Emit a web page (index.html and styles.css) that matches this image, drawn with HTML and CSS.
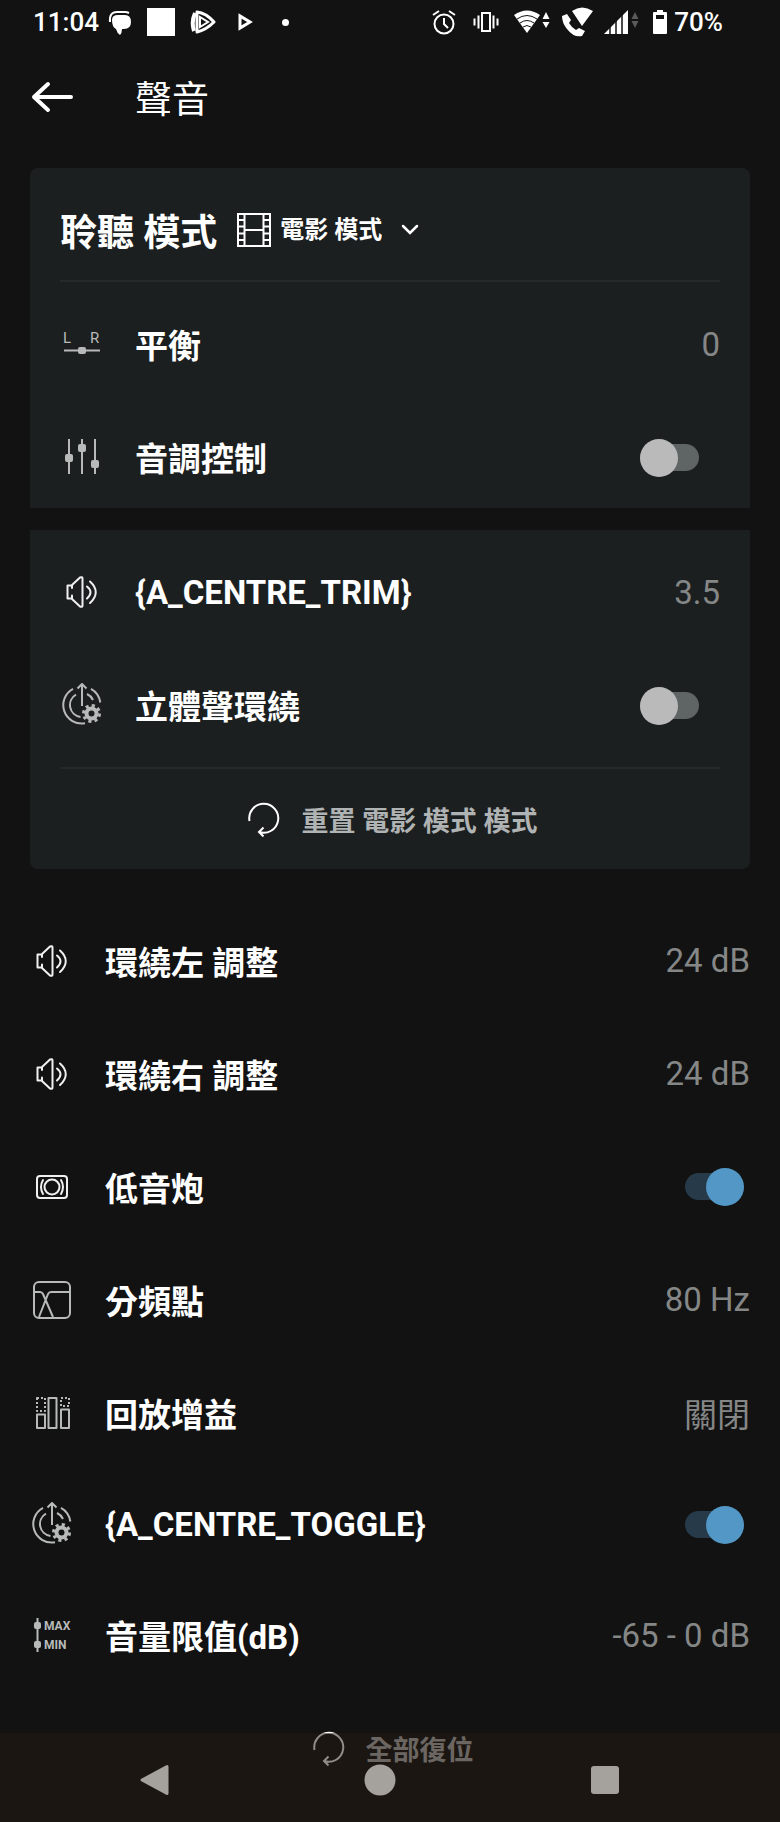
FILE: index.html
```
<!DOCTYPE html>
<html lang="zh-Hant">
<head>
    <meta charset="UTF-8">
    <meta name="viewport" content="width=device-width, initial-scale=1.0">
    <title>聲音</title>
    <link rel="stylesheet" href="styles.css">
</head>
<body>
    <!-- shared icons -->
    <svg class="sprite" aria-hidden="true">
        <symbol id="icon-speaker" viewBox="0 0 44 44">
            <path d="M12 15.500H7.500v13H12M12 18v-3l8-7.500q2.500-1 2.500 1v27q0 2-2.500 1L12 29v-3.500M27 16.500q7 5.500 0 12M30 11.500q11.500 10.500 0 21.500"/>
        </symbol>
        <symbol id="icon-source" viewBox="0 0 44 44">
            <path d="M13 5.800A18.500 18.500 0 0 0 25 40.300M31 5.800a18.500 18.500 0 0 1 9.300 13.700M16 11.600A12 12 0 0 0 20.500 33.900M27 11a12 12 0 0 1 6 6M22 23V1M17.500 5.500L22 1l4.500 4.500"/>
            <circle cx="31.500" cy="30.500" r="5" stroke-width="4"/>
            <circle cx="31.500" cy="30.500" r="8" stroke-width="3" stroke-dasharray="3.140"/>
        </symbol>
        <symbol id="icon-reset" viewBox="0 0 34 36">
            <path d="M2.500 20A14.500 14.500 0 1 1 12 31M16.500 26.500L12 31l4.500 4.500"/>
        </symbol>
    </svg>

    <div class="status-bar">
        <div class="status-left">
            <span class="clock">11:04</span>
            <svg class="s-chat" width="24" height="28" viewBox="0 0 24 28"><path d="M4 12q0-5 6-5h7q6 0 6 7t-7 7h-2q0 4-2 6-3-2-4-6-4-2-4-9z" fill="#fff"/><path d="M2 14Q1 4 9 4h8q2 0 4 1" fill="none" stroke="#fff" stroke-width="2"/></svg>
            <span class="s-square"></span>
            <svg class="s-cast" width="26" height="26" viewBox="0 0 26 26"><path d="M5 4Q1 13 4 22" fill="none" stroke="#fff" stroke-width="4"/><path d="M7 3v20q9-2 17-10Q16 4 7 3z" fill="none" stroke="#fff" stroke-width="3" stroke-linejoin="round"/><path d="M10 8v10l8-5z" fill="none" stroke="#fff" stroke-width="2"/></svg>
            <svg class="s-play" width="16" height="20" viewBox="0 0 16 20"><path d="M3 4v12l10-6z" fill="none" stroke="#fff" stroke-width="3"/></svg>
            <span class="s-dot"></span>
        </div>
        <div class="status-right">
            <svg class="s-alarm" width="24" height="26" viewBox="0 0 24 26"><g fill="none" stroke="#fff" stroke-width="2"><circle cx="12" cy="15" r="9.500"/><path d="M12 9v6l4 4M1 6l6-4M23 6l-6-4"/></g></svg>
            <svg class="s-vibrate" width="26" height="22" viewBox="0 0 26 22"><path d="M9 2h8v18H9zM5.500 4.500v13M20.500 4.500v13M1.500 7.500v7M24.500 7.500v7" fill="none" stroke="#fff" stroke-width="2"/></svg>
            <svg class="s-wifi" width="36" height="24" viewBox="0 0 36 24"><path d="M0 5q13-9 26 0L13 23z" fill="#fff"/><path d="M3 9q10-7 20 0M6 13q7-5 14 0M9 17q4-3 8 0" fill="none" stroke="#121212"/><path d="M32 2l3.500 7h-7zM32 18l3.500-6h-7z" fill="#fff"/></svg>
            <svg class="s-phone" width="32" height="30" viewBox="0 0 32 30"><path d="M11 4q10-7 21 0L21 19z" fill="#fff"/><path d="M1 9l5-2 4 6-2 3q3 5 7 7l3-2 6 3-3 5q-8 2-15-7Q1 16 1 9z" fill="#fff"/></svg>
            <svg class="s-signal" width="36" height="26" viewBox="0 0 36 26"><path d="M0 25L24 1v24z" fill="#fff"/><path d="M6 10v16M12 6v20M18 0v26" stroke="#121212" stroke-width="1.500"/><path d="M31 3l3.500 7h-7zM31 19l3.500-7h-7z" fill="#5a5a5a"/></svg>
            <svg class="s-battery" width="16" height="26" viewBox="0 0 16 26"><path d="M5 1h6v2h3q1 0 1 1v20q0 1-1 1H2q-1 0-1-1V4q0-1 1-1h3z" fill="#fff"/><path d="M4 6h8v4H4z" fill="#121212"/></svg>
            <span>70%</span>
        </div>
    </div>

    <header class="top-bar">
        <button class="back" aria-label="返回">
            <svg width="44" height="32" viewBox="0 0 44 32"><path d="M18 3L4 16l14 13M4 16h37" fill="none" stroke="#fff" stroke-width="4" stroke-linecap="round" stroke-linejoin="round"/></svg>
        </button>
        <h1>聲音</h1>
    </header>

    <main>
        <section class="card card-top">
            <div class="card-header">
                <h2><label for="mode">聆聽 模式</label></h2>
                <svg class="film" width="34" height="34" viewBox="0 0 34 34"><path d="M1 1h32v32H1zM7.500 1v32M26.500 1v32M7.500 17h19M1 7h6.500M1 13.500h6.500M1 20.500h6.500M1 27h6.500M26.500 7H33M26.500 13.500H33M26.500 20.500H33M26.500 27H33" fill="none" stroke="#fff" stroke-width="2"/></svg>
                <select id="mode" class="mode">
                    <option>電影 模式</option>
                </select>
                <svg class="chevron" width="18" height="12" viewBox="0 0 18 12"><path d="M2 2l7 7 7-7" fill="none" stroke="#fff" stroke-width="2.500" stroke-linecap="round"/></svg>
            </div>
            <div class="card-rows">
                <button class="row">
                    <svg class="icon grey" viewBox="0 0 44 44">
                        <text x="3" y="21" class="icon-text">L</text>
                        <text x="30" y="21" class="icon-text">R</text>
                        <path d="M4 28.500h36"/>
                        <rect class="knob" x="18" y="25" width="8" height="7" rx="2"/>
                    </svg>
                    <span class="name">平衡</span>
                    <span class="value">0</span>
                </button>
                <label class="row">
                    <svg class="icon grey" viewBox="0 0 44 44">
                        <path d="M9 4v35M22 4v35M35 4v35"/>
                        <rect class="knob" x="5" y="19" width="8" height="8" rx="2"/>
                        <rect class="knob" x="18" y="9" width="8" height="8" rx="2"/>
                        <rect class="knob" x="31" y="25" width="8" height="8" rx="2"/>
                    </svg>
                    <span class="name">音調控制</span>
                    <input type="checkbox" class="switch">
                </label>
            </div>
        </section>

        <section class="card card-bottom">
            <div class="card-rows">
                <button class="row">
                    <svg class="icon"><use href="#icon-speaker"/></svg>
                    <span class="name">{A_CENTRE_TRIM}</span>
                    <span class="value">3.5</span>
                </button>
                <label class="row">
                    <svg class="icon grey"><use href="#icon-source"/></svg>
                    <span class="name">立體聲環繞</span>
                    <input type="checkbox" class="switch">
                </label>
            </div>
            <button class="reset reset-mode">
                <svg class="reset-icon"><use href="#icon-reset"/></svg>
                <span>重置 電影 模式 模式</span>
            </button>
        </section>

        <section class="list">
            <button class="row">
                <svg class="icon"><use href="#icon-speaker"/></svg>
                <span class="name">環繞左 調整</span>
                <span class="value">24 dB</span>
            </button>
            <button class="row">
                <svg class="icon"><use href="#icon-speaker"/></svg>
                <span class="name">環繞右 調整</span>
                <span class="value">24 dB</span>
            </button>
            <label class="row">
                <svg class="icon" viewBox="0 0 44 44">
                    <rect x="7" y="11" width="30" height="22" rx="3"/>
                    <circle cx="22" cy="22" r="7.500"/>
                    <path d="M13 15q-4 7 0 14M31 15q4 7 0 14"/>
                </svg>
                <span class="name">低音炮</span>
                <input type="checkbox" class="switch" checked>
            </label>
            <button class="row">
                <svg class="icon grey" viewBox="0 0 44 44">
                    <rect x="4" y="4" width="36" height="36" rx="5"/>
                    <path d="M4 14h6q2 0 3 2l10 23M40 14H21q-2 0-3 2L9 39"/>
                </svg>
                <span class="name">分頻點</span>
                <span class="value">80 Hz</span>
            </button>
            <button class="row">
                <svg class="icon grey" viewBox="0 0 44 44">
                    <path d="M7 23.500h8V37H7zM18.500 7h8v30h-8zM31 18.500h8V37h-8z"/>
                    <path d="M7 7h8v13H7zM31 7h8v8h-8z" stroke-dasharray="2 2"/>
                </svg>
                <span class="name">回放增益</span>
                <span class="value">關閉</span>
            </button>
            <label class="row">
                <svg class="icon grey"><use href="#icon-source"/></svg>
                <span class="name">{A_CENTRE_TOGGLE}</span>
                <input type="checkbox" class="switch" checked>
            </label>
            <button class="row">
                <svg class="icon grey" viewBox="0 0 44 44">
                    <path d="M7.500 5v34"/>
                    <rect class="knob" x="4" y="9" width="7" height="7" rx="2"/>
                    <rect class="knob" x="4" y="28" width="7" height="7" rx="2"/>
                    <text x="14" y="17" class="icon-text small">MAX</text>
                    <text x="14" y="36" class="icon-text small">MIN</text>
                </svg>
                <span class="name">音量限值(dB)</span>
                <span class="value">-65 - 0 dB</span>
            </button>
        </section>

        <button class="reset reset-all">
            <svg class="reset-icon"><use href="#icon-reset"/></svg>
            <span>全部復位</span>
        </button>
    </main>

    <nav class="nav-bar">
        <button aria-label="返回"><svg width="32" height="32" viewBox="0 0 32 32"><path d="M28 2.500v27L3 16z" fill="#a5a19d" stroke="#a5a19d" stroke-width="3" stroke-linejoin="round"/></svg></button>
        <button aria-label="主畫面"><svg width="32" height="32" viewBox="0 0 32 32"><circle cx="16" cy="16" r="15.500" fill="#a5a19d"/></svg></button>
        <button aria-label="最近"><svg width="32" height="32" viewBox="0 0 32 32"><rect x="2" y="2" width="28" height="28" rx="3" fill="#a5a19d"/></svg></button>
    </nav>
</body>
</html>
```
FILE: styles.css
```
* {
    box-sizing: border-box;
}
body {
    display: flex;
    flex-direction: column;
    min-height: 100vh;
    margin: 0;
    background-color: #121212;
    color: #fff;
    font-family: Roboto, "Noto Sans CJK TC", sans-serif;
}
button, select {
    padding: 0;
    border: none;
    background: none;
    color: inherit;
    font-family: inherit;
    cursor: pointer;
}
.sprite {
    position: absolute;
    width: 0;
    height: 0;
}

/* status bar */
.status-bar {
    display: flex;
    justify-content: space-between;
    height: 44px;
    padding: 0 57px 0 33px;
    font-size: 26px;
    font-weight: 500;
    line-height: 44px;
}
.status-left, .status-right {
    display: flex;
    align-items: center;
}
.s-chat {
    margin-left: 9px;
}
.s-square {
    width: 28px;
    height: 28px;
    margin-left: 15px;
    background-color: #fff;
}
.s-cast {
    margin-left: 15px;
}
.s-play {
    margin-left: 21px;
}
.s-dot {
    width: 7px;
    height: 7px;
    margin-left: 29px;
    border-radius: 50%;
    background-color: #fff;
}
.s-vibrate {
    margin-left: 17px;
}
.s-wifi {
    margin-left: 15px;
}
.s-phone {
    margin-left: 11px;
}
.s-signal {
    margin-left: 11px;
}
.s-battery {
    margin: 0 6px 0 12px;
}

/* title */
.top-bar {
    display: flex;
    align-items: center;
    height: 106px;
    padding: 0 30px;
}
.back {
    width: 44px;
    height: 32px;
    margin-right: 61px;
}
h1 {
    margin: 0;
    font-size: 37px;
    font-weight: 400;
}

main {
    display: flex;
    flex: 1;
    flex-direction: column;
    padding-top: 18px;
}

/* cards */
.card {
    margin: 0 30px;
    padding: 0 30px;
    background-color: #1c1f20;
}
.card-top {
    margin-bottom: 22px;
    border-radius: 8px 8px 0 0;
}
.card-bottom {
    border-radius: 0 0 8px 8px;
}
.card-header {
    display: flex;
    align-items: center;
    height: 114px;
    padding-top: 12px;
    border-bottom: 2px solid #25292a;
}
h2 {
    margin: 0;
    font-size: 37px;
    font-weight: 700;
}
.film {
    margin: 0 9px 0 20px;
}
.mode {
    appearance: none;
    font-size: 24px;
    font-weight: 700;
}
.chevron {
    margin-left: 19px;
}
.card-rows {
    display: flex;
    flex-direction: column;
    gap: 13px;
    padding-top: 12px;
}
.card-top .card-rows {
    padding-bottom: 1px;
}
.card-bottom .card-rows {
    padding-bottom: 12px;
}
.card .row {
    height: 100px;
}
.card .switch {
    margin-right: 21px;
}

/* setting rows */
.row {
    display: flex;
    align-items: center;
    width: 100%;
    font-size: 33px;
    text-align: left;
    cursor: pointer;
}
.icon {
    width: 44px;
    height: 44px;
    margin-right: 31px;
    fill: none;
    stroke: #f0f0f0;
    stroke-width: 2;
    stroke-linecap: round;
    stroke-linejoin: round;
}
.icon.grey {
    stroke: #b8baba;
    stroke-linecap: butt;
}
.knob {
    fill: #b8baba;
    stroke: none;
}
.icon-text {
    fill: #b8baba;
    stroke: none;
    font-size: 15px;
}
.icon-text.small {
    font-size: 12px;
    font-weight: 700;
}
.name {
    flex: 1;
    font-weight: 700;
}
.value {
    color: #858787;
    font-weight: 400;
}
.switch {
    appearance: none;
    position: relative;
    width: 59px;
    height: 27px;
    margin: 0 6px 0 0;
    border-radius: 14px;
    background-color: #5f6464;
    cursor: pointer;
}
.switch::before {
    content: "";
    position: absolute;
    top: -5px;
    left: 0;
    width: 38px;
    height: 38px;
    border-radius: 50%;
    background-color: #bababa;
}
.switch:checked {
    background-color: #263a49;
}
.switch:checked::before {
    left: 21px;
    background-color: #5297c5;
}

.list {
    display: flex;
    flex: 1;
    flex-direction: column;
    padding: 35px 30px 0;
}
.list .row {
    flex: 1;
    min-height: 80px;
}

/* reset buttons */
.reset {
    display: flex;
    align-items: center;
    justify-content: center;
    width: 100%;
    padding-left: 5px;
    color: #b0b3b3;
    font-size: 27px;
    font-weight: 700;
}
.reset-icon {
    width: 34px;
    height: 36px;
    margin-right: 20px;
    fill: none;
    stroke: #fff;
    stroke-width: 2;
}
.reset-mode {
    height: 102px;
    border-top: 2px solid #25292a;
}
.reset-all {
    height: 112px;
    margin-bottom: 18px;
}

/* system navigation */
.nav-bar {
    position: fixed;
    right: 0;
    bottom: 0;
    left: 0;
    display: flex;
    justify-content: space-around;
    height: 89px;
    padding: 4px 62px 0 42px;
    background-color: rgba(38, 26, 18, 0.5);
}
.nav-bar button {
    display: flex;
    flex: 1;
    align-items: center;
    justify-content: center;
}
```
